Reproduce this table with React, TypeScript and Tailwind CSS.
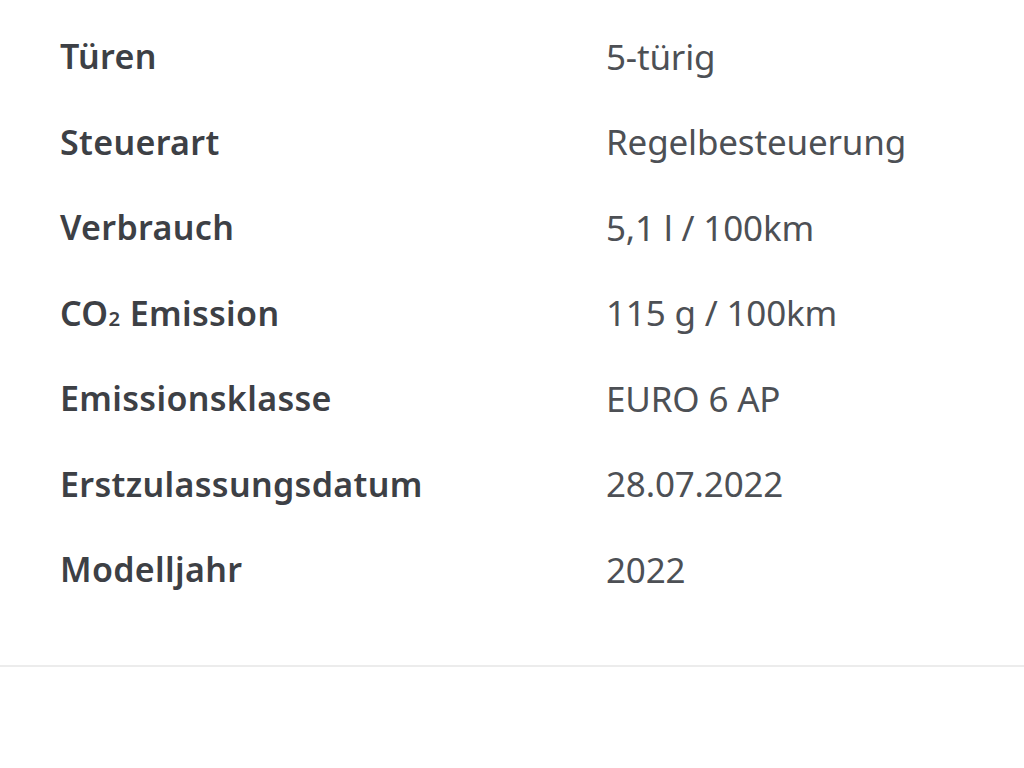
import React from 'react';

const rows: [React.ReactNode, string][] = [
    ["Türen", "5-türig"],
    ["Steuerart", "Regelbesteuerung"],
    ["Verbrauch", "5,1 l / 100km"],
    [<>CO<span className="text-[0.6em]">2</span> Emission</>, "115 g / 100km"],
    ["Emissionsklasse", "EURO 6 AP"],
    ["Erstzulassungsdatum", "28.07.2022"],
    ["Modelljahr", "2022"],
];

const App = () => {
    return (
        <div className="w-[1024px] h-[768px] bg-white overflow-hidden" style={{ fontFamily: '"Noto Sans", "Open Sans", sans-serif' }}>
            <div className="pt-[14px] pl-[60px] h-[665px]">
                {rows.map(([label, value], i) => (
                    <div key={i} className="grid grid-cols-[546px_1fr] h-[85.5px] items-center">
                        <span className="text-[34px] tracking-[0.01em] font-semibold text-[#3d4045]">{label}</span>
                        <span className="text-[35px] tracking-[-0.005em] text-[#4d5055]">{value}</span>
                    </div>
                ))}
            </div>
            <div className="h-[2px] bg-[#ececec]" />
        </div>
    );
};

export default App;
